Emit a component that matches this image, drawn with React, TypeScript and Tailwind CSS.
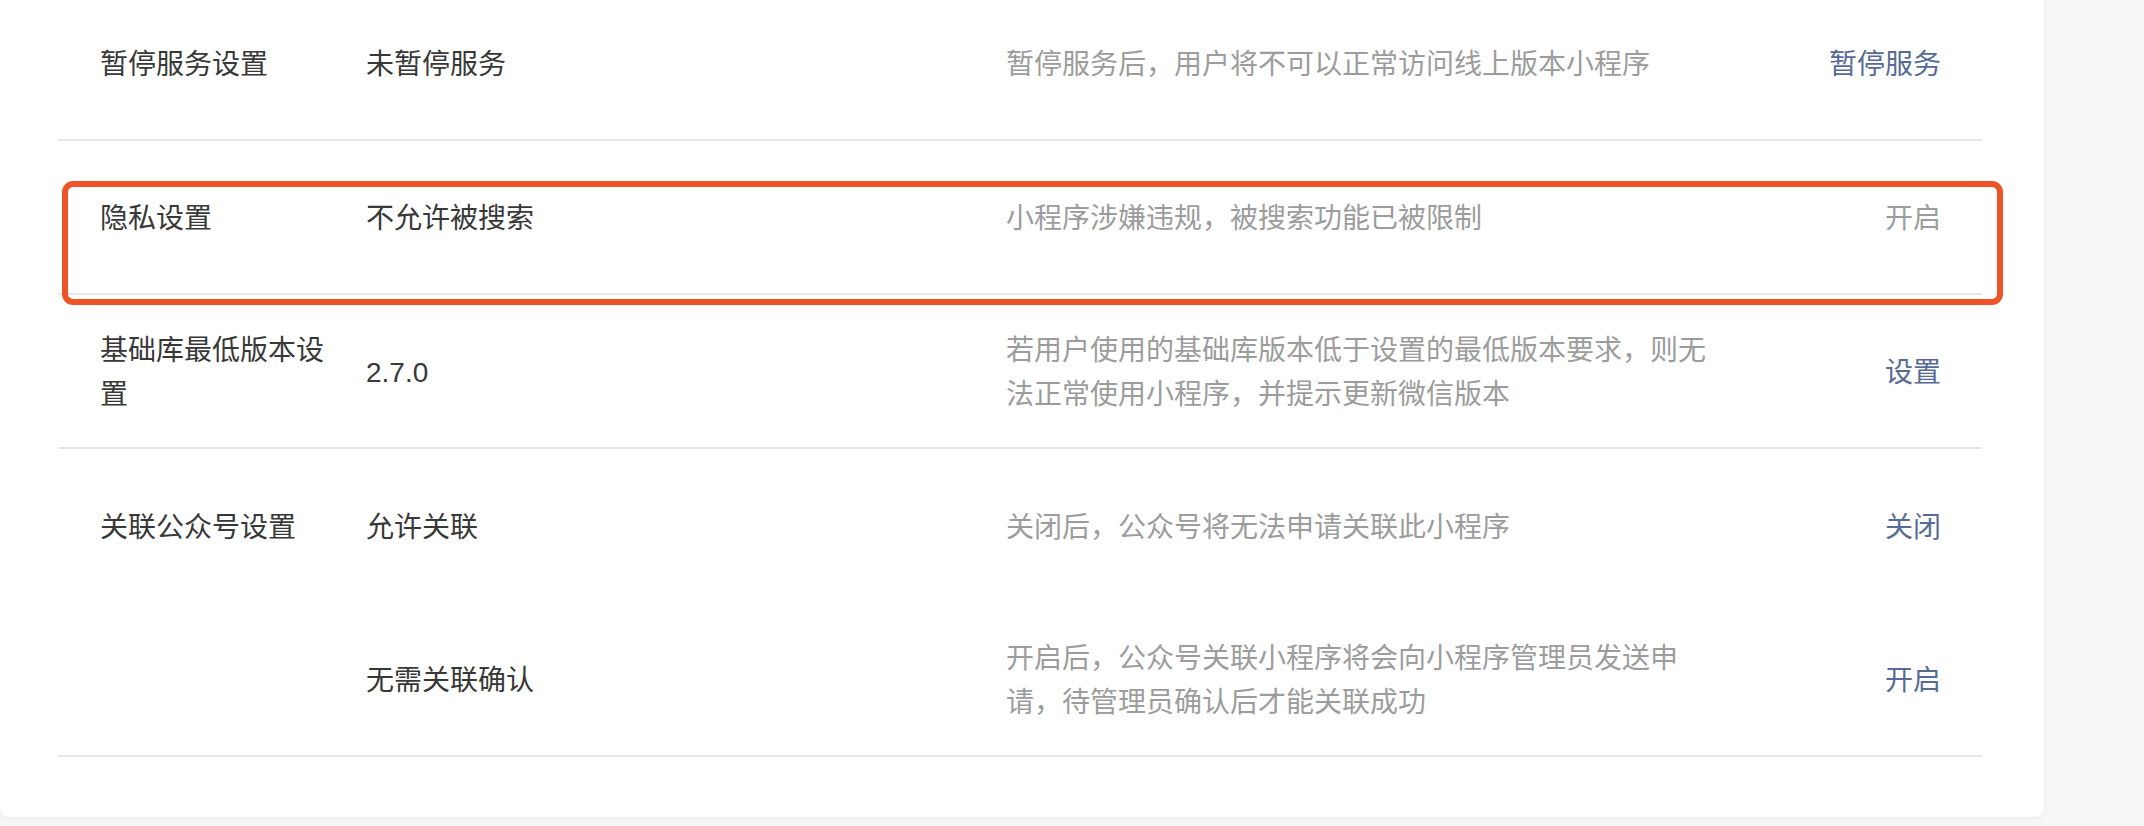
const rows = [
  {
    label: "暂停服务设置",
    value: "未暂停服务",
    desc: "暂停服务后，用户将不可以正常访问线上版本小程序",
    action: "暂停服务",
    border: true,
  },
  {
    label: "隐私设置",
    value: "不允许被搜索",
    desc: "小程序涉嫌违规，被搜索功能已被限制",
    action: "开启",
    disabled: true,
    border: true,
    marked: true,
  },
  {
    label: "基础库最低版本设置",
    value: "2.7.0",
    desc: "若用户使用的基础库版本低于设置的最低版本要求，则无法正常使用小程序，并提示更新微信版本",
    action: "设置",
    border: true,
  },
  {
    label: "关联公众号设置",
    value: "允许关联",
    desc: "关闭后，公众号将无法申请关联此小程序",
    action: "关闭",
    border: false,
  },
  {
    label: "",
    value: "无需关联确认",
    desc: "开启后，公众号关联小程序将会向小程序管理员发送申请，待管理员确认后才能关联成功",
    action: "开启",
    border: true,
  },
];

export default function App() {
  return (
    <div className="w-[2144px] h-[826px] overflow-hidden bg-[#f6f7f9] font-['Liberation_Sans','Noto_Sans_CJK_SC',sans-serif] text-[28px] leading-[44px]">
      <div className="w-[2044px] -mt-[13px] pb-[60px] bg-white rounded-[8px] shadow-[0_1px_4px_rgba(0,0,0,0.06)]">
        <div className="ml-[58px] w-[1924px]">
          {rows.map((row, i) => (
            <div
              key={i}
              className={`relative flex items-center h-[154px] pt-[3px] pl-[42px] pr-[41px] ${
                row.border ? "border-b-2 border-[#e7e7e7]" : ""
              }`}
            >
              <div className="w-[266px] shrink-0 pr-[26px] text-[#383838]">{row.label}</div>
              <div className="w-[640px] shrink-0 text-[#383838]">{row.value}</div>
              <div className="w-[712px] shrink-0 text-[#9c9c9c]">{row.desc}</div>
              <div className="flex-1 text-right">
                <a
                  href="#"
                  className={row.disabled ? "text-[#9c9c9c]" : "text-[#576b95]"}
                >
                  {row.action}
                </a>
              </div>

              {/* annotation box */}
              {row.marked && (
                <div className="absolute left-[4px] top-[40px] w-[1941px] h-[124px] border-[6px] border-[#ee5428] rounded-[11px] pointer-events-none" />
              )}
            </div>
          ))}
        </div>
      </div>
    </div>
  );
}
